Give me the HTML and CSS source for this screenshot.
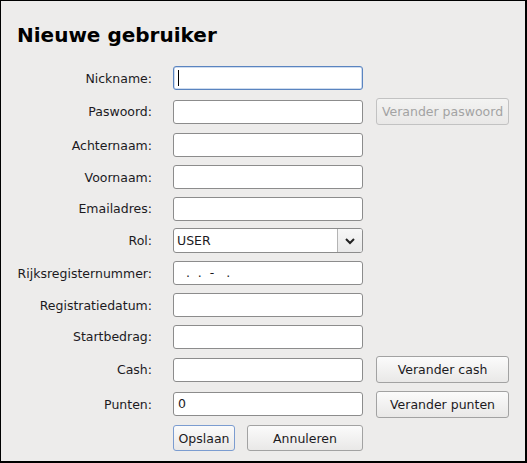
FILE: index.html
```html
<!DOCTYPE html>
<html lang="nl">
<head>
<meta charset="utf-8">
<title>Nieuwe gebruiker</title>
<link rel="stylesheet" href="styles.css">
</head>
<body>
<div class="window">
  <h1 class="title">Nieuwe gebruiker</h1>
  <div class="form">
    <label class="lbl">Nickname:</label>
    <div class="field focus"><span class="caret"></span></div>
    <span></span>

    <label class="lbl">Paswoord:</label>
    <div class="field"></div>
    <button class="btn disabled" disabled>Verander paswoord</button>

    <label class="lbl">Achternaam:</label>
    <div class="field"></div>
    <span></span>

    <label class="lbl">Voornaam:</label>
    <div class="field"></div>
    <span></span>

    <label class="lbl">Emailadres:</label>
    <div class="field"></div>
    <span></span>

    <label class="lbl">Rol:</label>
    <div class="field select">
      <span class="sel-text">USER</span>
      <span class="sel-arrow"><svg width="12" height="8" viewBox="0 0 12 8"><path d="M2 2 L6 6 L10 2" fill="none" stroke="#222" stroke-width="2"/></svg></span>
    </div>
    <span></span>

    <label class="lbl">Rijksregisternummer:</label>
    <div class="field mask">  .  .  -   .</div>
    <span></span>

    <label class="lbl">Registratiedatum:</label>
    <div class="field"></div>
    <span></span>

    <label class="lbl">Startbedrag:</label>
    <div class="field"></div>
    <span></span>

    <label class="lbl">Cash:</label>
    <div class="field"></div>
    <button class="btn">Verander cash</button>

    <label class="lbl">Punten:</label>
    <div class="field">0</div>
    <button class="btn">Verander punten</button>

    <span></span>
    <div class="actions">
      <button class="btn focus-btn">Opslaan</button>
      <button class="btn wide">Annuleren</button>
    </div>
    <span></span>
  </div>
</div>
</body>
</html>
```

FILE: styles.css
```css
html, body {
  margin: 0;
  padding: 0;
  background: #edeceb;
}
body {
  font-family: "DejaVu Sans", sans-serif;
  font-size: 12.5px;
  color: #1c1a1e;
}
.window {
  box-sizing: border-box;
  width: 527px;
  height: 463px;
  border: 1px solid #000;
  border-right-width: 2px;
  border-bottom-width: 2px;
  background: #edeceb;
  padding: 0 0 0 12px;
}
.title {
  margin: 0;
  padding: 22px 0 0 4px;
  font-size: 20px;
  line-height: 24px;
  font-weight: bold;
  color: #000;
}
.form {
  display: grid;
  grid-template-columns: 147px 190px 133px;
  grid-template-rows: 24px 27px 24px 24px 23px 25px 24px 24px 23px 27px 26px 26px;
  column-gap: 13px;
  row-gap: 8px;
  margin-top: 19px;
  align-items: center;
}
.lbl {
  text-align: right;
  white-space: nowrap;
  padding-right: 8px;
}
.field {
  box-sizing: border-box;
  height: 24px;
  background: #fff;
  border: 1px solid #8c8c8c;
  border-radius: 3px;
  padding: 0 4px;
  line-height: 22px;
  white-space: pre;
  display: flex;
  align-items: center;
}
.field.focus {
  border-color: #5a84c0;
  box-shadow: inset 0 0 0 0.5px #9fb9de;
}
.caret {
  display: block;
  width: 1px;
  height: 16px;
  background: #000;
}
.select {
  height: 25px;
  padding: 0 0 0 3px;
  justify-content: space-between;
}
.sel-arrow {
  width: 24px;
  height: 100%;
  border-left: 1px solid #b4b4b4;
  background: linear-gradient(#f7f7f7, #e9e9e9);
  border-radius: 0 2px 2px 0;
  display: flex;
  align-items: center;
  justify-content: center;
}
.mask { padding-left: 4px; }
.btn {
  box-sizing: border-box;
  height: 27px;
  font-family: "DejaVu Sans", sans-serif;
  font-size: 12.5px;
  color: #1c1a1e;
  background: linear-gradient(#fbfbfb, #e9e8e7);
  border: 1px solid #a2a2a2;
  border-radius: 3px;
  padding: 0 4px;
  white-space: nowrap;
}
.btn.disabled {
  color: #a3a3a3;
  border-color: #c2c2c2;
  background: linear-gradient(#f3f3f2, #e9e8e7);
}
.actions {
  display: flex;
  gap: 12px;
  height: 26px;
}
.actions .btn { height: 26px; }
.focus-btn {
  width: 62px;
  border-color: #7b9cd0;
}
.wide { width: 116px; }
```
